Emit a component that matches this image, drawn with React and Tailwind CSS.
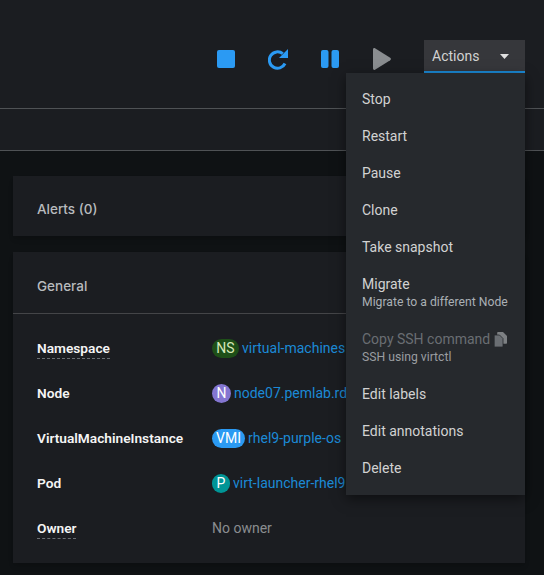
const rows = [
  { label: "Namespace", dashed: true, badge: "NS", badgeCls: "bg-[#1e4f18] text-[#d8e8b8] w-[27px]", value: "virtual-machines" },
  { label: "Node", badge: "N", badgeCls: "bg-[#8476d1] text-white w-[19px]", value: "node07.pemlab.rd" },
  { label: "VirtualMachineInstance", badge: "VMI", badgeCls: "bg-[#2b9af3] text-white w-[33px]", value: "rhel9-purple-os" },
  { label: "Pod", badge: "P", badgeCls: "bg-[#009596] text-white w-[18px]", value: "virt-launcher-rhel9" },
];

function Row({ r }) {
  return (
    <div className="flex h-[45px] items-center">
      <div className="w-[175px] shrink-0">
        <span className={`block w-fit text-[13.7px] leading-[19px] font-semibold text-[#f5f5f5] ${r.dashed ? "border-b border-dashed border-[#6a6e73]" : ""}`}>{r.label}</span>
      </div>
      <div className="flex w-[142px] items-center gap-[3px] whitespace-nowrap">
        <span className={`flex h-[19px] shrink-0 items-center justify-center rounded-full text-[14px] ${r.badgeCls}`}>{r.badge}</span>
        <span className="text-[14px] text-[#1b8ad6]">{r.value}</span>
      </div>
    </div>
  );
}

function Item({ children, sub, disabled, icon }) {
  return (
    <div className={`flex flex-col justify-center px-4 ${sub ? "h-[55px]" : "h-[37px]"}`}>
      <div className={`flex items-center gap-1 whitespace-nowrap text-[14px] leading-[20px] ${disabled ? "text-[#6a6e73]" : "text-[#d2d2d2]"}`}>
        {children}
        {icon}
      </div>
      {sub && <div className={`whitespace-nowrap text-[12.2px] leading-[17px] ${disabled ? "text-[#9a9da1]" : "text-[#aab0b5]"}`}>{sub}</div>}
    </div>
  );
}

export default function App() {
  return (
    <div className="relative h-[575px] w-[544px] overflow-hidden bg-[#0f1214] font-['Roboto',sans-serif]">
      <header className="h-[109px] border-b border-[#4f5255] bg-[#1b1d21] pt-[40px] pr-[19px]">
        <div className="flex items-start justify-end">
          <div className="flex h-[37px] items-center">
            <svg width="18" height="18" viewBox="0 0 18 18"><rect width="18" height="18" rx="2" fill="#2b9af3" /></svg>
            <svg className="ml-[33px]" width="20" height="22" viewBox="0 0 20 22" fill="none">
              <path d="M14.800 5.700A8.200 8.200 0 1 0 17 15.500" stroke="#2b9af3" strokeWidth="3" />
              <path d="M20 1v9h-9z" fill="#2b9af3" />
            </svg>
            <svg className="ml-[33px]" width="18" height="18" viewBox="0 0 18 18" fill="#2b9af3"><rect width="7.500" height="18" rx="2" /><rect x="10.500" width="7.500" height="18" rx="2" /></svg>
            <svg className="ml-[34px]" width="18" height="22" viewBox="0 0 18 22" fill="#8a8d90"><path d="M0 1.500C0 .3 1-.3 2 .3l15.200 9.400c.9.6.9 2 0 2.600L2 21.700c-1 .6-2 0-2-1.200z" /></svg>
          </div>
          <button className="ml-[33px] flex h-[33px] w-[101px] items-center border-b-2 border-[#1b8ad6] bg-[#36373b] pt-[1px] pl-2 text-[14px] text-[#d2d2d2]">
            Actions
            <svg className="ml-[21px]" width="9" height="5" viewBox="0 0 9 5" fill="#e0e0e0"><path d="M0 0h9L4.500 5z" /></svg>
          </button>
        </div>
      </header>
      <div className="h-[42px] border-b border-[#4f5255] bg-[#1b1d21]" />
      <main className="flex flex-col gap-4 pr-[19px] pl-[13px] pt-[25px]">
        <section className="flex h-[60px] items-center bg-[#1b1d21] pt-[6px] pl-6 shadow-md">
          <h2 className="font-['Inter',sans-serif] text-[13.5px] font-medium text-[#b8bbbe]">Alerts (0)</h2>
        </section>
        <section className="h-[311px] bg-[#1b1d21] shadow-md">
          <div className="flex h-[62px] items-center border-b border-[#444548] pt-[8px] pl-6">
            <h2 className="font-['Inter',sans-serif] text-[13.5px] font-medium text-[#b8bbbe]">General</h2>
          </div>
          <div className="pt-[12px] pl-6">
            {rows.map((r) => <Row key={r.label} r={r} />)}
            <div className="flex h-[45px] items-center">
              <div className="w-[175px] shrink-0">
                <span className="block w-fit border-b border-dashed border-[#6a6e73] text-[13.7px] leading-[19px] font-semibold text-[#f5f5f5]">Owner</span>
              </div>
              <span className="text-[14px] text-[#8a8d90]">No owner</span>
            </div>
          </div>
        </section>
      </main>
      <div className="absolute top-[73px] left-[346px] h-[422px] w-[179px] bg-[#26292d] pt-[7px] shadow-[0_4px_12px_rgba(0,0,0,0.5)]">
        <Item>Stop</Item>
        <Item>Restart</Item>
        <Item>Pause</Item>
        <Item>Clone</Item>
        <Item>Take snapshot</Item>
        <Item sub="Migrate to a different Node">Migrate</Item>
        <Item disabled sub="SSH using virtctl" icon={
          <svg width="13" height="15" viewBox="0 0 13 15">
            <path d="M4 0h5l4 4v7a.8.8 0 0 1-.8.8H4a.8.8 0 0 1-.8-.8V.8A.8.8 0 0 1 4 0z" fill="#7d8083" />
            <path d="M1 3h4.500l3.500 3.500v7.700a.8.8 0 0 1-.8.8H1a.8.8 0 0 1-.8-.8V3.800A.8.8 0 0 1 1 3z" fill="#6a6e73" stroke="#26292d" strokeWidth=".8" />
          </svg>
        }>Copy SSH command</Item>
        <Item>Edit labels</Item>
        <Item>Edit annotations</Item>
        <Item>Delete</Item>
      </div>
    </div>
  );
}
